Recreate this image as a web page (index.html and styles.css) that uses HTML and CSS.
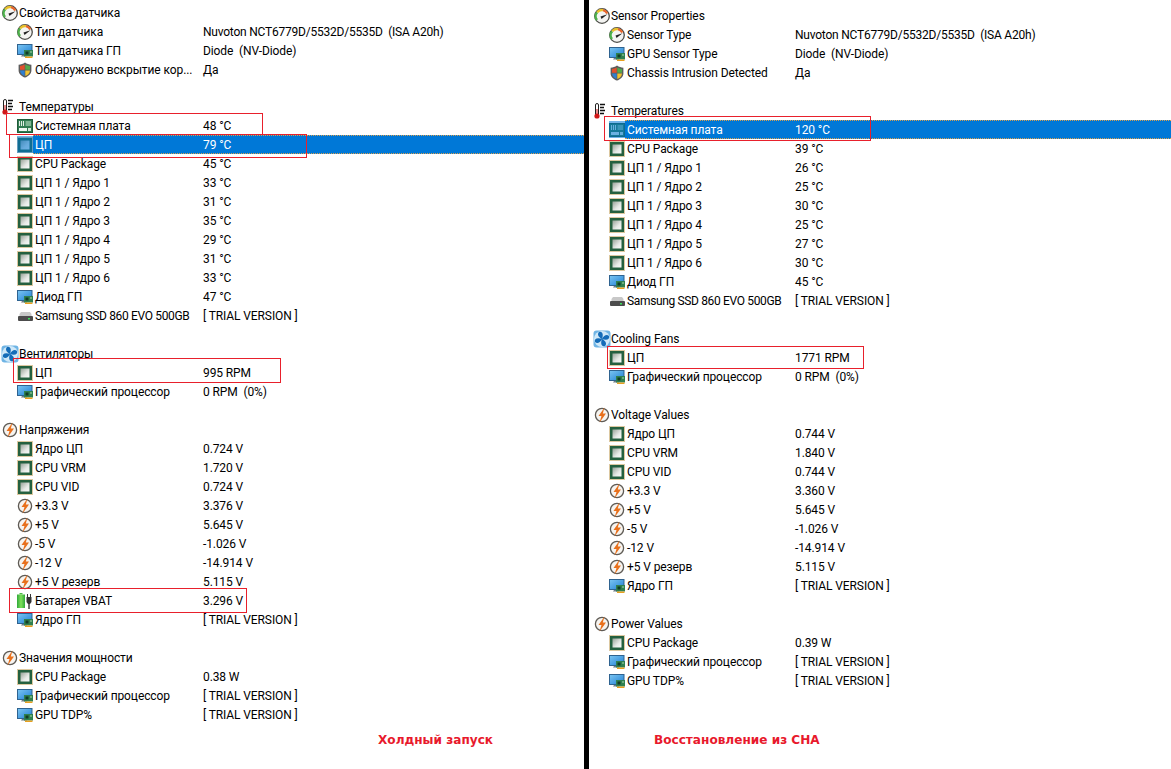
FILE: index.html
```html
<!DOCTYPE html>
<html lang="ru">
<head>
<meta charset="utf-8">
<title>Sensors</title>
<link rel="stylesheet" href="styles.css">
</head>
<body>
<svg class="defs" width="0" height="0" aria-hidden="true">
<defs>
<linearGradient id="scr" x1="0" y1="0" x2="1" y2="1"><stop offset="0" stop-color="#7cc6f2"/><stop offset="1" stop-color="#1f7fd4"/></linearGradient>
<linearGradient id="die" x1="0" y1="0" x2="1" y2="1"><stop offset="0" stop-color="#98a298"/><stop offset=".6" stop-color="#e6e9e6"/><stop offset="1" stop-color="#fafafa"/></linearGradient>
<linearGradient id="bat" x1="0" y1="0" x2="1" y2="0"><stop offset="0" stop-color="#2fa83a"/><stop offset=".5" stop-color="#7fe05a"/><stop offset="1" stop-color="#2fa83a"/></linearGradient>
<symbol id="i-gauge" viewBox="0 0 16 16"><circle cx="8" cy="8" r="7.300" fill="#f4f4f2" stroke="#4c4c48" stroke-width="1.300"/><path d="M3 12A6 6 0 0 1 3.200 4.200" fill="none" stroke="#4cb04a" stroke-width="2.400"/><path d="M3.200 4.200A6 6 0 0 1 9 2.100" fill="none" stroke="#e8c02a" stroke-width="2.400"/><path d="M9 2.100A6 6 0 0 1 13.300 5.500" fill="none" stroke="#e8662c" stroke-width="2.400"/><path d="M6.500 8.500L13.500 6.200L7.500 11Z" fill="#222"/></symbol>
<symbol id="i-gpu" viewBox="0 0 16 16"><rect x=".5" y="1.500" width="14.500" height="10" fill="url(#scr)" stroke="#2f6390"/><path d="M5 12h5v1.500H4z" fill="#6e7c86"/><rect x="7" y="7" width="9" height="6.500" fill="#2f8050"/><rect x="8.500" y="8.500" width="3" height="3" fill="#123c26"/><rect x="13" y="8.500" width="2" height="1" fill="#a8d8a8"/><path d="M8 13.500h7.500V15H8z" fill="#e8a020"/></symbol>
<symbol id="i-shield" viewBox="0 0 16 16"><path d="M8 .6C6 2 4 2.600 1.600 2.800V8.500C1.600 12 5 14.600 8 15.600C11 14.600 14.400 12 14.400 8.500V2.800C12 2.600 10 2 8 .6Z" fill="#5c5c5c"/><path d="M7.700 2.500C6.200 3.400 4.700 3.900 3 4.100V7.800H7.700Z" fill="#e2502c"/><path d="M8.300 2.500C9.800 3.400 11.300 3.900 13 4.100V7.800H8.300Z" fill="#54a94a"/><path d="M3 8.400H7.700V14C5.300 13 3.200 11.200 3 8.400Z" fill="#2f7fd0"/><path d="M8.300 8.400H13C12.800 11.200 10.700 13 8.300 14Z" fill="#f2c32e"/></symbol>
<symbol id="i-therm" viewBox="0 0 16 16"><rect x="1.500" y=".5" width="3" height="12" rx="1.500" fill="#fff" stroke="#222"/><rect x="2.500" y="6" width="1" height="6" fill="#d01818"/><circle cx="3" cy="13" r="2.600" fill="#d01818"/><path d="M6 1.500h5M6 4.500h4M6 7.500h5M6 10.500h4" stroke="#111" stroke-width="1.300"/></symbol>
<symbol id="i-board" viewBox="0 0 16 16"><rect x=".5" y="1.500" width="15" height="13" fill="#2f7a50" stroke="#1f5a38"/><path d="M2.500 3v5M4.500 3v5M6.500 3v5" stroke="#e4efe6" stroke-width="1.100"/><rect x="8.500" y="3" width="5.500" height="5" fill="#7fb593"/><rect x="2" y="10" width="8" height="3" fill="#eef5f0"/><rect x="11" y="10" width="3" height="3" fill="#d8e8dc"/></symbol>
<symbol id="i-cpu" viewBox="0 0 16 16"><rect x=".5" y=".5" width="15" height="15" fill="none" stroke="#b89040" stroke-dasharray="1 1"/><rect x="1" y="1" width="14" height="14" fill="#24603f"/><rect x="3.500" y="3.500" width="9" height="9" fill="url(#die)"/></symbol>
<symbol id="i-ssd" viewBox="0 0 16 16"><path d="M2.500 6L4 4H13L14.500 6V8H2.500Z" fill="#c8c8c8"/><rect x="1" y="8" width="15" height="5" rx="1" fill="#4c4c4c"/><rect x="11" y="10" width="2" height="1.500" fill="#3be05a"/></symbol>
<symbol id="i-fan" viewBox="0 0 18 18"><rect x=".5" y=".5" width="17" height="17" rx="3" fill="#6fb4e4"/><circle cx="9" cy="9" r="8" fill="#cfe8f8"/><path d="M9 9C5 7 4 4 6 2C9 1 11 4 9 9ZM9 9C11 5 14 4 16 6C17 9 14 11 9 9ZM9 9C13 11 14 14 12 16C9 17 7 14 9 9ZM9 9C7 13 4 14 2 12C1 9 4 7 9 9Z" fill="#146cb8"/></symbol>
<symbol id="i-bolt" viewBox="0 0 16 16"><circle cx="8" cy="8" r="6.600" fill="#f6f4f0" stroke="#5e5a54" stroke-width="1.300"/><path d="M10.500 .5L4.500 9H7.500L5.500 15.500L12 6.500H8.800Z" fill="#e8701c"/></symbol>
<symbol id="i-batt" viewBox="0 0 16 16"><rect x="2.500" y="0" width="3" height="1.500" fill="#4cb848"/><rect x="0" y="1.500" width="8" height="13.500" fill="url(#bat)"/><path d="M10.500 1v3M13.500 1v3" stroke="#333" stroke-width="1"/><path d="M9.500 4h5v5l-1.500 2h-2l-1.500-2z" fill="#333"/><rect x="11.300" y="11" width="1.400" height="5" fill="#333"/></symbol>
</defs>
</svg>
<main class="page">
<section class="panel panel-a">
<div class="row head"><span class="ico"><svg><use href="#i-gauge"/></svg></span><span class="cells"><span class="label">Свойства датчика</span></span></div>
<div class="row"><span class="ico"><svg><use href="#i-gauge"/></svg></span><span class="cells"><span class="label">Тип датчика</span><span class="chip-name">Nuvoton NCT6779D/5532D/5535D  (ISA A20h)</span></span></div>
<div class="row"><span class="ico"><svg><use href="#i-gpu"/></svg></span><span class="cells"><span class="label">Тип датчика ГП</span><span>Diode  (NV-Diode)</span></span></div>
<div class="row"><span class="ico"><svg><use href="#i-shield"/></svg></span><span class="cells"><span class="label">Обнаружено вскрытие кор...</span><span>Да</span></span></div>
<div class="gap gap-short"></div>
<div class="row head"><span class="ico"><svg><use href="#i-therm"/></svg></span><span class="cells"><span class="label">Температуры</span></span></div>
<div class="row"><span class="ico"><svg><use href="#i-board"/></svg></span><span class="cells"><span class="label">Системная плата</span><span>48 °C</span></span></div>
<div class="row selected"><span class="ico"><svg><use href="#i-cpu"/></svg></span><span class="cells"><span class="label">ЦП</span><span>79 °C</span></span></div>
<div class="row"><span class="ico"><svg><use href="#i-cpu"/></svg></span><span class="cells"><span class="label">CPU Package</span><span>45 °C</span></span></div>
<div class="row"><span class="ico"><svg><use href="#i-cpu"/></svg></span><span class="cells"><span class="label">ЦП 1 / Ядро 1</span><span>33 °C</span></span></div>
<div class="row"><span class="ico"><svg><use href="#i-cpu"/></svg></span><span class="cells"><span class="label">ЦП 1 / Ядро 2</span><span>31 °C</span></span></div>
<div class="row"><span class="ico"><svg><use href="#i-cpu"/></svg></span><span class="cells"><span class="label">ЦП 1 / Ядро 3</span><span>35 °C</span></span></div>
<div class="row"><span class="ico"><svg><use href="#i-cpu"/></svg></span><span class="cells"><span class="label">ЦП 1 / Ядро 4</span><span>29 °C</span></span></div>
<div class="row"><span class="ico"><svg><use href="#i-cpu"/></svg></span><span class="cells"><span class="label">ЦП 1 / Ядро 5</span><span>31 °C</span></span></div>
<div class="row"><span class="ico"><svg><use href="#i-cpu"/></svg></span><span class="cells"><span class="label">ЦП 1 / Ядро 6</span><span>33 °C</span></span></div>
<div class="row"><span class="ico"><svg><use href="#i-gpu"/></svg></span><span class="cells"><span class="label">Диод ГП</span><span>47 °C</span></span></div>
<div class="row"><span class="ico"><svg><use href="#i-ssd"/></svg></span><span class="cells"><span class="label drive-name">Samsung SSD 860 EVO 500GB</span><span>[ TRIAL VERSION ]</span></span></div>
<div class="gap"></div>
<div class="row head"><span class="ico"><svg class="big"><use href="#i-fan"/></svg></span><span class="cells"><span class="label">Вентиляторы</span></span></div>
<div class="row"><span class="ico"><svg><use href="#i-cpu"/></svg></span><span class="cells"><span class="label">ЦП</span><span>995 RPM</span></span></div>
<div class="row"><span class="ico"><svg><use href="#i-gpu"/></svg></span><span class="cells"><span class="label">Графический процессор</span><span>0 RPM  (0%)</span></span></div>
<div class="gap"></div>
<div class="row head"><span class="ico"><svg><use href="#i-bolt"/></svg></span><span class="cells"><span class="label">Напряжения</span></span></div>
<div class="row"><span class="ico"><svg><use href="#i-cpu"/></svg></span><span class="cells"><span class="label">Ядро ЦП</span><span>0.724 V</span></span></div>
<div class="row"><span class="ico"><svg><use href="#i-cpu"/></svg></span><span class="cells"><span class="label">CPU VRM</span><span>1.720 V</span></span></div>
<div class="row"><span class="ico"><svg><use href="#i-cpu"/></svg></span><span class="cells"><span class="label">CPU VID</span><span>0.724 V</span></span></div>
<div class="row"><span class="ico"><svg><use href="#i-bolt"/></svg></span><span class="cells"><span class="label">+3.3 V</span><span>3.376 V</span></span></div>
<div class="row"><span class="ico"><svg><use href="#i-bolt"/></svg></span><span class="cells"><span class="label">+5 V</span><span>5.645 V</span></span></div>
<div class="row"><span class="ico"><svg><use href="#i-bolt"/></svg></span><span class="cells"><span class="label">-5 V</span><span>-1.026 V</span></span></div>
<div class="row"><span class="ico"><svg><use href="#i-bolt"/></svg></span><span class="cells"><span class="label">-12 V</span><span>-14.914 V</span></span></div>
<div class="row"><span class="ico"><svg><use href="#i-bolt"/></svg></span><span class="cells"><span class="label">+5 V резерв</span><span>5.115 V</span></span></div>
<div class="row"><span class="ico"><svg><use href="#i-batt"/></svg></span><span class="cells"><span class="label">Батарея VBAT</span><span>3.296 V</span></span></div>
<div class="row"><span class="ico"><svg><use href="#i-gpu"/></svg></span><span class="cells"><span class="label">Ядро ГП</span><span>[ TRIAL VERSION ]</span></span></div>
<div class="gap"></div>
<div class="row head"><span class="ico"><svg><use href="#i-bolt"/></svg></span><span class="cells"><span class="label">Значения мощности</span></span></div>
<div class="row"><span class="ico"><svg><use href="#i-cpu"/></svg></span><span class="cells"><span class="label">CPU Package</span><span>0.38 W</span></span></div>
<div class="row"><span class="ico"><svg><use href="#i-gpu"/></svg></span><span class="cells"><span class="label">Графический процессор</span><span>[ TRIAL VERSION ]</span></span></div>
<div class="row"><span class="ico"><svg><use href="#i-gpu"/></svg></span><span class="cells"><span class="label">GPU TDP%</span><span>[ TRIAL VERSION ]</span></span></div>
<p class="caption">Холдный запуск</p>
<div class="mark mark-a1"></div>
<div class="mark mark-a2"></div>
<div class="mark mark-a3"></div>
<div class="mark mark-a4"></div>
</section>
<div class="divider"></div>
<section class="panel panel-b">
<div class="row head"><span class="ico"><svg><use href="#i-gauge"/></svg></span><span class="cells"><span class="label">Sensor Properties</span></span></div>
<div class="row"><span class="ico"><svg><use href="#i-gauge"/></svg></span><span class="cells"><span class="label">Sensor Type</span><span class="chip-name">Nuvoton NCT6779D/5532D/5535D  (ISA A20h)</span></span></div>
<div class="row"><span class="ico"><svg><use href="#i-gpu"/></svg></span><span class="cells"><span class="label">GPU Sensor Type</span><span>Diode  (NV-Diode)</span></span></div>
<div class="row"><span class="ico"><svg><use href="#i-shield"/></svg></span><span class="cells"><span class="label">Chassis Intrusion Detected</span><span>Да</span></span></div>
<div class="gap"></div>
<div class="row head"><span class="ico"><svg><use href="#i-therm"/></svg></span><span class="cells"><span class="label">Temperatures</span></span></div>
<div class="row selected"><span class="ico"><svg><use href="#i-board"/></svg></span><span class="cells"><span class="label">Системная плата</span><span>120 °C</span></span></div>
<div class="row"><span class="ico"><svg><use href="#i-cpu"/></svg></span><span class="cells"><span class="label">CPU Package</span><span>39 °C</span></span></div>
<div class="row"><span class="ico"><svg><use href="#i-cpu"/></svg></span><span class="cells"><span class="label">ЦП 1 / Ядро 1</span><span>26 °C</span></span></div>
<div class="row"><span class="ico"><svg><use href="#i-cpu"/></svg></span><span class="cells"><span class="label">ЦП 1 / Ядро 2</span><span>25 °C</span></span></div>
<div class="row"><span class="ico"><svg><use href="#i-cpu"/></svg></span><span class="cells"><span class="label">ЦП 1 / Ядро 3</span><span>30 °C</span></span></div>
<div class="row"><span class="ico"><svg><use href="#i-cpu"/></svg></span><span class="cells"><span class="label">ЦП 1 / Ядро 4</span><span>25 °C</span></span></div>
<div class="row"><span class="ico"><svg><use href="#i-cpu"/></svg></span><span class="cells"><span class="label">ЦП 1 / Ядро 5</span><span>27 °C</span></span></div>
<div class="row"><span class="ico"><svg><use href="#i-cpu"/></svg></span><span class="cells"><span class="label">ЦП 1 / Ядро 6</span><span>30 °C</span></span></div>
<div class="row"><span class="ico"><svg><use href="#i-gpu"/></svg></span><span class="cells"><span class="label">Диод ГП</span><span>45 °C</span></span></div>
<div class="row"><span class="ico"><svg><use href="#i-ssd"/></svg></span><span class="cells"><span class="label drive-name">Samsung SSD 860 EVO 500GB</span><span>[ TRIAL VERSION ]</span></span></div>
<div class="gap"></div>
<div class="row head"><span class="ico"><svg class="big"><use href="#i-fan"/></svg></span><span class="cells"><span class="label">Cooling Fans</span></span></div>
<div class="row"><span class="ico"><svg><use href="#i-cpu"/></svg></span><span class="cells"><span class="label">ЦП</span><span>1771 RPM</span></span></div>
<div class="row"><span class="ico"><svg><use href="#i-gpu"/></svg></span><span class="cells"><span class="label">Графический процессор</span><span>0 RPM  (0%)</span></span></div>
<div class="gap"></div>
<div class="row head"><span class="ico"><svg><use href="#i-bolt"/></svg></span><span class="cells"><span class="label">Voltage Values</span></span></div>
<div class="row"><span class="ico"><svg><use href="#i-cpu"/></svg></span><span class="cells"><span class="label">Ядро ЦП</span><span>0.744 V</span></span></div>
<div class="row"><span class="ico"><svg><use href="#i-cpu"/></svg></span><span class="cells"><span class="label">CPU VRM</span><span>1.840 V</span></span></div>
<div class="row"><span class="ico"><svg><use href="#i-cpu"/></svg></span><span class="cells"><span class="label">CPU VID</span><span>0.744 V</span></span></div>
<div class="row"><span class="ico"><svg><use href="#i-bolt"/></svg></span><span class="cells"><span class="label">+3.3 V</span><span>3.360 V</span></span></div>
<div class="row"><span class="ico"><svg><use href="#i-bolt"/></svg></span><span class="cells"><span class="label">+5 V</span><span>5.645 V</span></span></div>
<div class="row"><span class="ico"><svg><use href="#i-bolt"/></svg></span><span class="cells"><span class="label">-5 V</span><span>-1.026 V</span></span></div>
<div class="row"><span class="ico"><svg><use href="#i-bolt"/></svg></span><span class="cells"><span class="label">-12 V</span><span>-14.914 V</span></span></div>
<div class="row"><span class="ico"><svg><use href="#i-bolt"/></svg></span><span class="cells"><span class="label">+5 V резерв</span><span>5.115 V</span></span></div>
<div class="row"><span class="ico"><svg><use href="#i-gpu"/></svg></span><span class="cells"><span class="label">Ядро ГП</span><span>[ TRIAL VERSION ]</span></span></div>
<div class="gap"></div>
<div class="row head"><span class="ico"><svg><use href="#i-bolt"/></svg></span><span class="cells"><span class="label">Power Values</span></span></div>
<div class="row"><span class="ico"><svg><use href="#i-cpu"/></svg></span><span class="cells"><span class="label">CPU Package</span><span>0.39 W</span></span></div>
<div class="row"><span class="ico"><svg><use href="#i-gpu"/></svg></span><span class="cells"><span class="label">Графический процессор</span><span>[ TRIAL VERSION ]</span></span></div>
<div class="row"><span class="ico"><svg><use href="#i-gpu"/></svg></span><span class="cells"><span class="label">GPU TDP%</span><span>[ TRIAL VERSION ]</span></span></div>
<p class="caption">Восстановление из СНА</p>
<div class="mark mark-b1"></div>
<div class="mark mark-b2"></div>
</section>
</main>
</body>
</html>
```
FILE: styles.css
```css
* { box-sizing: border-box; }
html, body { margin: 0; height: 100%; background: #fff; overflow: hidden; }
body { font: 12px/19px Roboto, "Noto Sans", sans-serif; color: #000; letter-spacing: -.1px; }
.defs { position: absolute; }
.page { display: flex; height: 769px; }
.divider { width: 5px; background: #000; flex: none; }
.panel { position: relative; display: flex; flex-direction: column; }
.panel-a { width: 584px; padding: 3px 0 0 2px; flex: none; }
.panel-b { flex: 1; padding: 6px 0 0 5px; min-width: 0; }
.row { display: flex; height: 19px; padding-left: 15px; white-space: pre; flex: none; }
.row.head { padding-left: 0; }
.ico { position: relative; width: 16px; height: 19px; flex: none; display: flex; align-items: center; justify-content: center; }
.ico svg { width: 16px; height: 16px; display: block; flex: none; }
.ico svg.big { width: 18px; height: 18px; }
.cells { display: flex; flex: 1; padding: 1px 0 0 2px; min-width: 0; }
.head .cells { padding-left: 1px; }
.label { width: 168px; flex: none; }
.head .label { width: auto; }
.chip-name { letter-spacing: -.22px; }
.drive-name { letter-spacing: -.35px; }
.selected .cells { padding-top: 0; background: #0078d7; color: #fff; border-top: 1px dotted #d8a050; border-bottom: 1px dotted #d8a050; }
.selected .ico::after { content: ""; position: absolute; inset: 1px 0; background: rgba(0, 120, 215, .55); }
.gap { height: 19px; flex: none; }
.gap-short { height: 18px; }
.caption { margin: auto 0 19px; font: bold 12.1px/19px "DejaVu Sans", sans-serif; letter-spacing: 0; color: #e8192c; }
.panel-a .caption { margin-left: 376px; }
.panel-b .caption { margin-left: 60px; }
.mark { position: absolute; border: 1px solid #e8202c; pointer-events: none; }
.mark-a1 { left: 6px; top: 113px; width: 257px; height: 22px; }
.mark-a2 { left: 9px; top: 134px; width: 298px; height: 24px; }
.mark-a3 { left: 13px; top: 358px; width: 268px; height: 25px; }
.mark-a4 { left: 9px; top: 588px; width: 238px; height: 25px; }
.mark-b1 { left: 15px; top: 116px; width: 267px; height: 25px; }
.mark-b2 { left: 18px; top: 346px; width: 257px; height: 23px; }
```
